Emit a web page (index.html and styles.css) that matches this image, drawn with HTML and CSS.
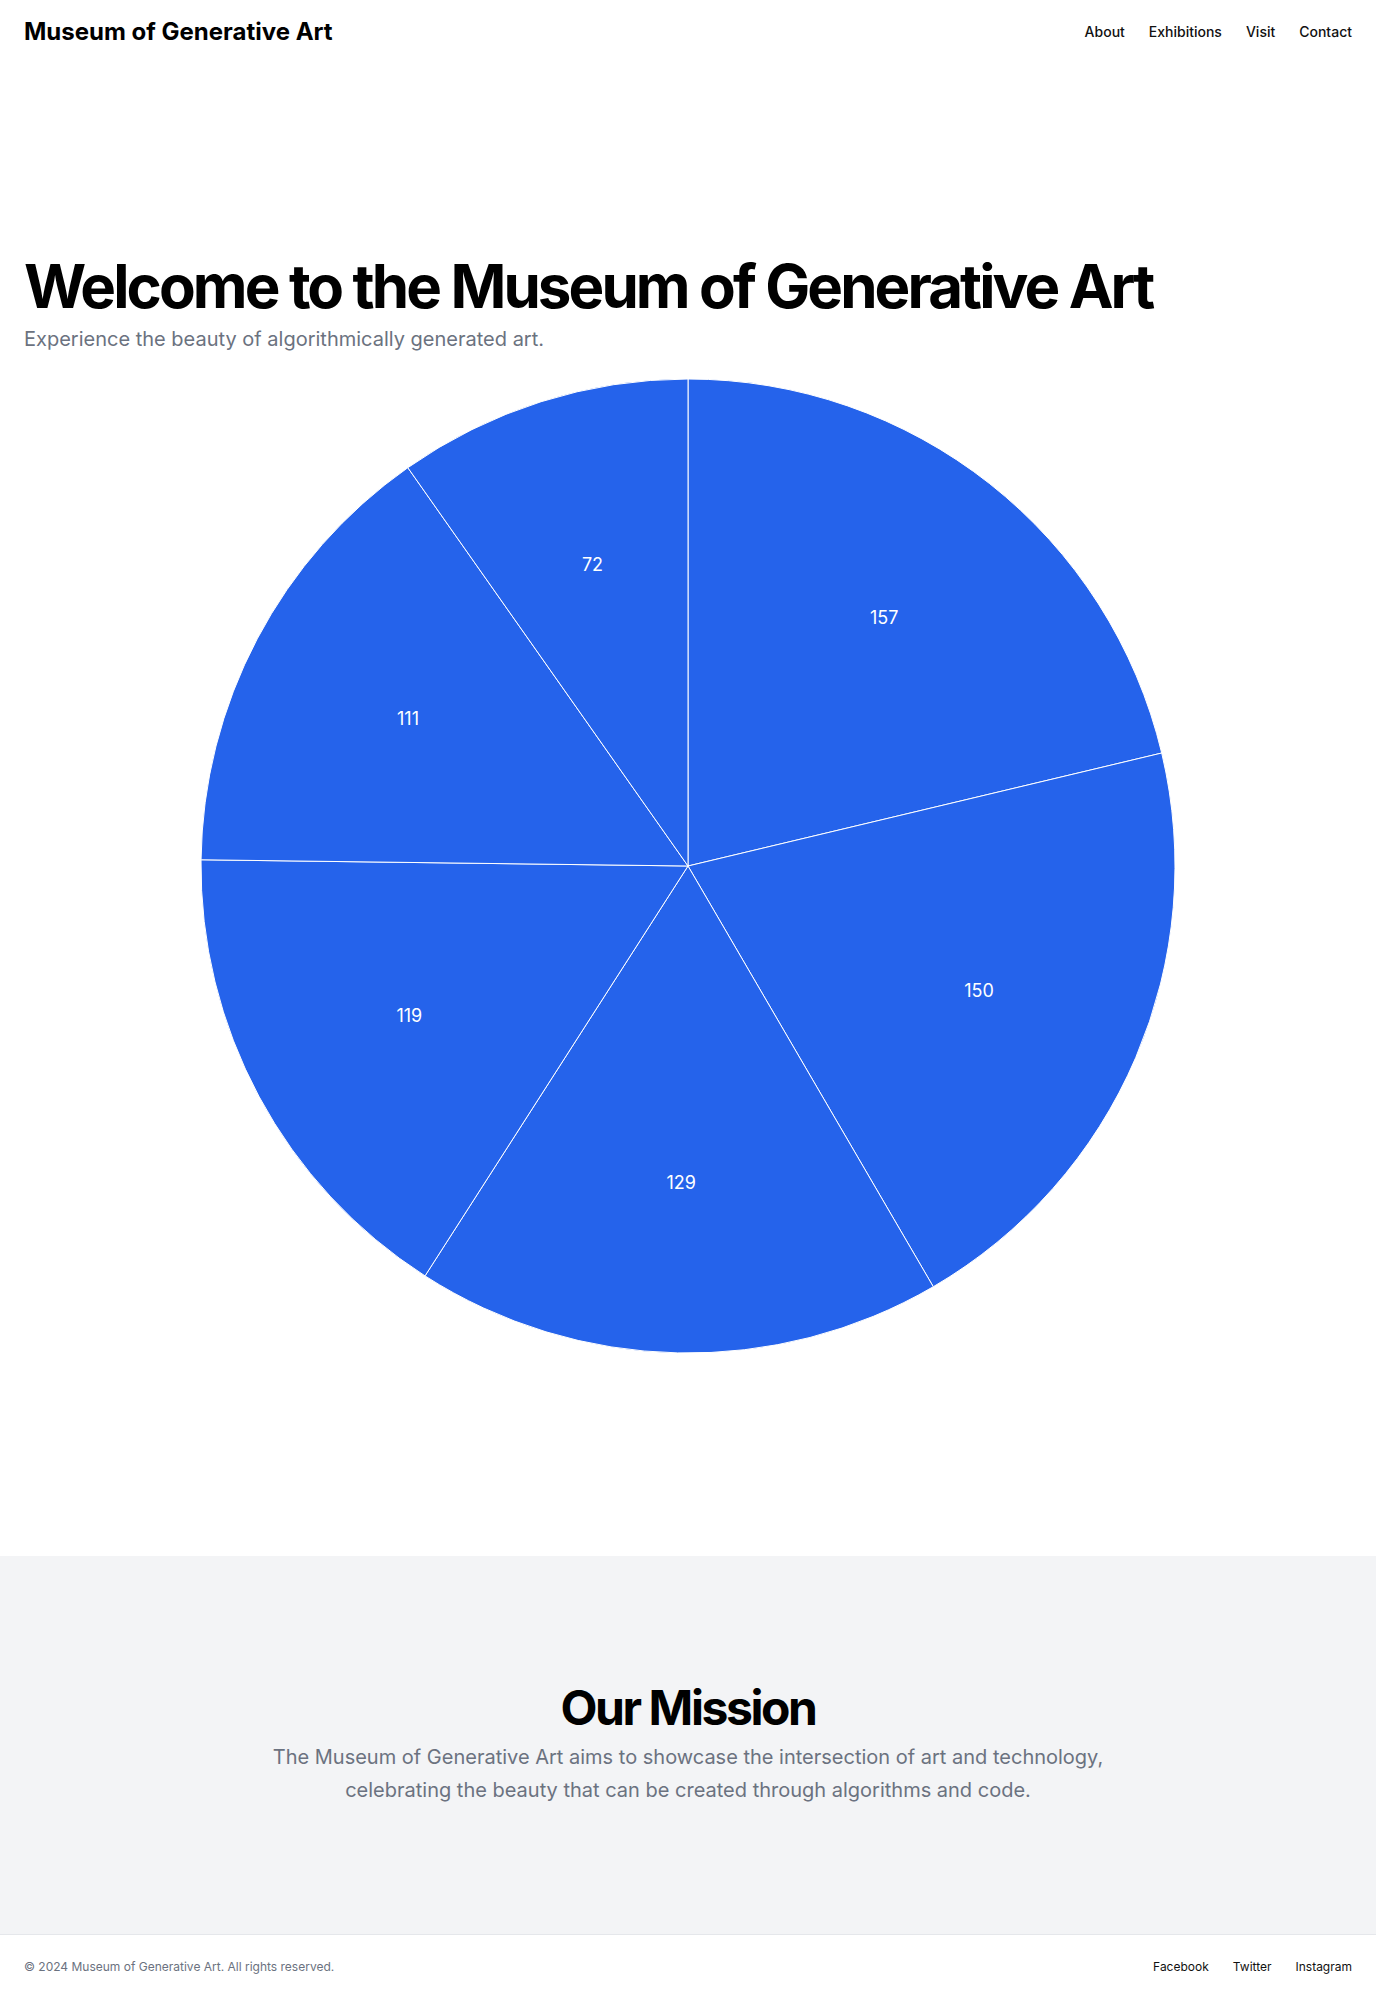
FILE: index.html
```html
<!DOCTYPE html>
<html lang="en">
<head>
<meta charset="utf-8">
<title>Museum of Generative Art</title>
<link rel="stylesheet" href="styles.css">
</head>
<body>
<header class="site-header">
  <div class="brand">Museum of Generative Art</div>
  <nav class="nav">
    <a href="#">About</a>
    <a href="#">Exhibitions</a>
    <a href="#">Visit</a>
    <a href="#">Contact</a>
  </nav>
</header>
<main>
  <section class="hero">
    <h1 class="hero-title">Welcome to the Museum of Generative Art</h1>
    <p class="hero-sub">Experience the beauty of algorithmically generated art.</p>
    <svg class="pie" width="1000" height="1000" viewBox="0 0 1000 1000">
      <g class="slices">
        <path d="M500,500 L500,13 A487,487 0 0 1 973.71,387.02 Z"/>
        <path d="M500,500 L973.71,387.02 A487,487 0 0 1 745.30,920.72 Z"/>
        <path d="M500,500 L745.30,920.72 A487,487 0 0 1 237.02,909.90 Z"/>
        <path d="M500,500 L237.02,909.90 A487,487 0 0 1 13.04,493.78 Z"/>
        <path d="M500,500 L13.04,493.78 A487,487 0 0 1 219.82,101.67 Z"/>
        <path d="M500,500 L219.82,101.67 A487,487 0 0 1 500,13 Z"/>
      </g>
      <g class="labels">
        <text x="696.13" y="251.59" dy="0.35em">157</text>
        <text x="790.97" y="624.54" dy="0.35em">150</text>
        <text x="493.26" y="816.43" dy="0.35em">129</text>
        <text x="221.31" y="650.01" dy="0.35em">119</text>
        <text x="220.04" y="352.36" dy="0.35em">111</text>
        <text x="404.50" y="198.25" dy="0.35em">72</text>
      </g>
    </svg>
  </section>
  <section class="mission">
    <div class="mission-inner">
      <h2 class="mission-title">Our Mission</h2>
      <p class="mission-text">The Museum of Generative Art aims to showcase the intersection of art and technology, celebrating the beauty that can be created through algorithms and code.</p>
    </div>
  </section>
</main>
<footer class="site-footer">
  <p class="copy">© 2024 Museum of Generative Art. All rights reserved.</p>
  <nav class="footer-nav">
    <a href="#">Facebook</a>
    <a href="#">Twitter</a>
    <a href="#">Instagram</a>
  </nav>
</footer>
</body>
</html>
```
FILE: styles.css
```css
* { box-sizing: border-box; }
html, body { margin: 0; padding: 0; }
body {
  font-family: Inter, "Noto Sans", "Liberation Sans", sans-serif;
  color: #000;
  background: #fff;
}
a { color: inherit; text-decoration: none; }

.site-header {
  height: 64px;
  padding: 0 24px;
  display: flex;
  align-items: center;
  justify-content: space-between;
}
.brand {
  font-size: 24px;
  line-height: 32px;
  font-weight: 700;
  color: #000;
}
.nav {
  display: flex;
  gap: 24px;
  font-size: 14px;
  line-height: 20px;
  font-weight: 500;
  color: #111;
}

.hero {
  padding: 192px 24px 190px;
  display: flex;
  flex-direction: column;
}
.hero-title {
  margin: 0;
  font-size: 60px;
  line-height: 60px;
  font-weight: 700;
  letter-spacing: -2.9px;
  color: #000;
}
.hero-sub {
  margin: 9px 0 0;
  font-size: 20px;
  line-height: 28px;
  color: #6b7280;
}
.pie {
  display: block;
  margin: 13px auto 0;
  font-family: Inter, "Noto Sans", sans-serif;
}
.slices path {
  fill: #2563eb;
  stroke: #fff;
  stroke-width: 1;
}
.labels text {
  fill: #fff;
  font-size: 18px;
  text-anchor: middle;
}

.mission {
  background: #f3f4f6;
  padding: 128px 24px;
}
.mission-inner {
  max-width: 896px;
  margin: 0 auto;
  text-align: center;
}
.mission-title {
  margin: 0;
  font-size: 48px;
  line-height: 48px;
  font-weight: 700;
  letter-spacing: -0.05em;
  color: #000;
}
.mission-text {
  margin: 9px 0 0;
  font-size: 20px;
  line-height: 32.5px;
  color: #6b7280;
}

.site-footer {
  border-top: 1px solid #e5e7eb;
  padding: 24px;
  display: flex;
  justify-content: space-between;
  align-items: center;
}
.copy {
  margin: 0;
  font-size: 12px;
  line-height: 16px;
  color: #6b7280;
}
.footer-nav {
  display: flex;
  gap: 24px;
  font-size: 12px;
  line-height: 16px;
  color: #111;
}
```
